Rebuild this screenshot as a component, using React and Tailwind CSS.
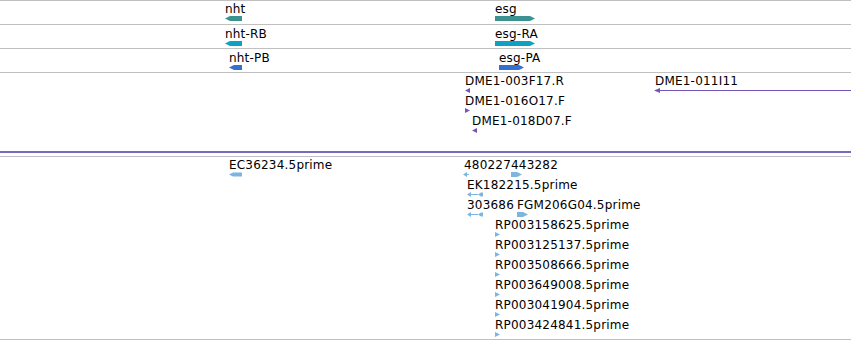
import React from "react";

const TEAL = "#3c9191";
const CYAN = "#0ea1c2";
const BLUE = "#356fd0";
const PURPLE = "#7455b5";
const LBLUE = "#7db5e0";

// Features sit on a genomic-coordinate canvas: their x is the content itself.
function Label({ x, y, text }) {
  return (
    <span
      className="absolute whitespace-nowrap text-[12px] leading-[14px] tracking-[0.2px] text-black"
      style={{ left: x, top: y }}
    >
      {text}
    </span>
  );
}

function Glyph({ x, y, w, h = 5, children }) {
  return (
    <svg
      className="absolute block"
      style={{ left: x, top: y }}
      width={w}
      height={h}
      viewBox={`0 0 ${w} ${h}`}
    >
      {children}
    </svg>
  );
}

const leftBar = (w) => `0,2.5 5,0 ${w},0 ${w},5 5,5`;
const rightBar = (w) => `0,0 ${w - 5},0 ${w},2.5 ${w - 5},5 0,5`;
const triL = "0,2.5 5,0 5,5";
const triR = "0,0 5,2.5 0,5";

function GeneTrack({ left, right, color, lx, rx, lw, rw, labelTop, barTop }) {
  return (
    <div className="relative h-[24px] border-t border-[#c0c0c0]">
      <Label x={lx} y={labelTop} text={left} />
      <Glyph x={lx} y={barTop} w={lw}>
        <polygon points={leftBar(lw)} fill={color} />
      </Glyph>
      <Label x={rx} y={labelTop} text={right} />
      <Glyph x={rx} y={barTop} w={rw}>
        <polygon points={rightBar(rw)} fill={color} />
      </Glyph>
    </div>
  );
}

function DoubleArrow({ x, y }) {
  return (
    <Glyph x={x} y={y} w={16}>
      <polygon points="0,2.5 4,0 4,5" fill={LBLUE} />
      <rect x="4" y="2" width="7" height="1" fill={LBLUE} />
      <polygon points="11,2.5 14,0.5 16,0.5 16,4.5 14,4.5" fill={LBLUE} />
    </Glyph>
  );
}

const rpRows = [
  "RP003158625.5prime",
  "RP003125137.5prime",
  "RP003508666.5prime",
  "RP003649008.5prime",
  "RP003041904.5prime",
  "RP003424841.5prime",
];

export default function App() {
  return (
    <div className="w-[851px] h-[340px] bg-white overflow-hidden flex flex-col font-['DejaVu_Sans',sans-serif] antialiased">
      <GeneTrack left="nht" right="esg" color={TEAL} lx={225} rx={495} lw={17} rw={40} labelTop={1} barTop={15} />
      <GeneTrack left="nht-RB" right="esg-RA" color={CYAN} lx={225} rx={495} lw={17} rw={40} labelTop={2} barTop={16} />
      <div className="relative h-[24px] border-t border-[#c0c0c0]">
        <Label x={229} y={2} text="nht-PB" />
        <Glyph x={229} y={16} w={13}>
          <polygon points={leftBar(13)} fill={BLUE} />
        </Glyph>
        <Label x={499} y={2} text="esg-PA" />
        <Glyph x={499} y={16} w={25}>
          <polygon points={rightBar(25)} fill={BLUE} />
        </Glyph>
      </div>

      {/* BAC ends track */}
      <div className="relative h-[79px] border-t border-[#c0c0c0]">
        <Label x={465} y={1} text="DME1-003F17.R" />
        <Glyph x={465} y={15} w={5}>
          <polygon points={triL} fill={PURPLE} />
        </Glyph>
        <Label x={465} y={21} text="DME1-016O17.F" />
        <Glyph x={465} y={35} w={5}>
          <polygon points={triR} fill={PURPLE} />
        </Glyph>
        <Label x={472} y={41} text="DME1-018D07.F" />
        <Glyph x={472} y={55} w={5}>
          <polygon points={triL} fill={PURPLE} />
        </Glyph>
        <Label x={655} y={1} text="DME1-011I11" />
        <Glyph x={654} y={15} w={197}>
          <polygon points="0,2.5 6,0 6,5" fill={PURPLE} />
          <rect x="6" y="2" width="191" height="1" fill={PURPLE} />
        </Glyph>
      </div>
      <div className="h-[2px] bg-[#7a68bb]" />
      <div className="h-[3px]" />

      {/* EST track */}
      <div className="relative h-[184px] border-y border-[#c0c0c0]">
        <Label x={229} y={1} text="EC36234.5prime" />
        <Glyph x={229} y={15} w={13}>
          <polygon points="0,2.5 4,0.5 13,0.5 13,4.5 4,4.5" fill={LBLUE} />
        </Glyph>
        <Label x={464} y={1} text="480227443282" />
        <Glyph x={463} y={15} w={6}>
          <polygon points="0,2.5 4,0 4,2 6,2 6,3 4,3 4,5" fill={LBLUE} />
        </Glyph>
        <Glyph x={511} y={15} w={11}>
          <polygon points={rightBar(11)} fill={LBLUE} />
        </Glyph>

        <Label x={467} y={21} text="EK182215.5prime" />
        <DoubleArrow x={467} y={35} />

        <Label x={467} y={41} text="303686" />
        <DoubleArrow x={467} y={55} />
        <Label x={517} y={41} text="FGM206G04.5prime" />
        <Glyph x={517} y={55} w={11}>
          <polygon points={rightBar(11)} fill={LBLUE} />
        </Glyph>

        {rpRows.map((t, i) => (
          <React.Fragment key={t}>
            <Label x={495} y={61 + i * 20} text={t} />
            <Glyph x={495} y={75 + i * 20} w={5}>
              <polygon points={triR} fill={LBLUE} />
            </Glyph>
          </React.Fragment>
        ))}
      </div>
    </div>
  );
}
